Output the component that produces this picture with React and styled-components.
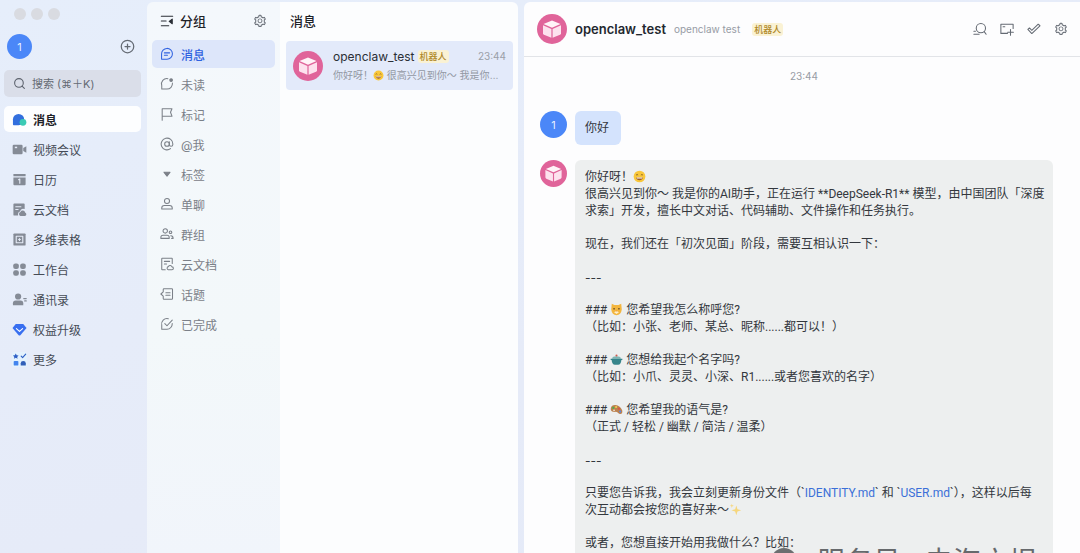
import React, { useState } from 'react';
import styled, { createGlobalStyle } from 'styled-components';
import { AtSign, CirclePlus, Search } from 'lucide-react';
import { AiOutlineSetting } from 'react-icons/ai';

const GlobalStyle = createGlobalStyle`
  * {
    box-sizing: border-box;
  }

  body {
    margin: 0;
    overflow: hidden;
    color: #2b2f36;
    font-family: Inter, 'Noto Sans CJK SC', sans-serif;
    font-size: 12px;
  }

  button, input {
    font: inherit;
    color: inherit;
  }

  button {
    border: 0;
    padding: 0;
    background: none;
    cursor: pointer;
  }

  h1, h2, p, ul {
    margin: 0;
    padding: 0;
  }
`;

const Container = styled.div`
  display: flex;
  width: 100%;
  height: 100vh;
  overflow: hidden;
  background: linear-gradient(160deg, #e6eefb 0%, #e6ebf8 60%, #e4eaf8 100%);
`;

// sidebar

const Sidebar = styled.aside`
  flex: 0 0 147px;
  display: flex;
  flex-direction: column;
  padding: 8px 6px 0 4px;
`;

const WindowDots = styled.div`
  display: flex;
  gap: 5px;
  padding-left: 10px;
`;

const Dot = styled.span`
  width: 12px;
  height: 12px;
  border-radius: 50%;
  background: #d9dbe1;
`;

const ProfileRow = styled.div`
  display: flex;
  align-items: center;
  justify-content: space-between;
  padding: 0 6px 0 3px;
  margin-top: 14px;
`;

const Avatar = styled.span`
  flex: none;
  display: flex;
  align-items: center;
  justify-content: center;
  width: ${props => props.$size}px;
  height: ${props => props.$size}px;
  border-radius: 50%;
  background: #4b87f8;
  color: #e6efff;
  font-size: 11px;
`;

const IconButton = styled.button`
  display: flex;
  align-items: center;
  justify-content: center;
  width: 16px;
  height: 16px;
  color: #646a73;
`;

const SearchBox = styled.label`
  display: flex;
  align-items: center;
  gap: 6px;
  height: 27px;
  margin: 11px 0 9px;
  padding: 0 9px;
  border-radius: 5px;
  background: #dadee9;
  color: #5c626d;

  svg {
    flex: none;
  }

  input {
    width: 100%;
    min-width: 0;
    border: 0;
    padding: 0;
    outline: 0;
    background: none;
    font-size: 11px;
  }

  input::placeholder {
    color: #646a73;
    opacity: 1;
  }
`;

const NavList = styled.nav`
  display: flex;
  flex-direction: column;
  gap: ${props => props.$gap}px;
`;

const NavItem = styled.button`
  display: flex;
  align-items: center;
  gap: 6px;
  width: 100%;
  height: 26px;
  padding-left: 8px;
  border-radius: 5px;
  background: ${props => props.$active ? '#fdfeff' : 'transparent'};
  color: ${props => props.$active ? '#1f2329' : '#454b56'};
  font-weight: ${props => props.$active ? 600 : 400};
`;

// groups

const GroupPanel = styled.section`
  flex: 0 0 133px;
  margin-top: 2px;
  padding: 11px 5px 0;
  border-radius: 6px 0 0 0;
  background: linear-gradient(180deg, #f4f8fc 0%, #f3f8fa 60%, #f1f5fb 100%);
`;

const GroupHeader = styled.div`
  display: flex;
  align-items: center;
  gap: 6px;
  height: 16px;
  padding: 0 7px 0 8px;
  margin-bottom: 11px;

  button {
    margin-left: auto;
  }
`;

const PanelTitle = styled.h2`
  font-size: 13px;
  font-weight: 500;
  line-height: 16px;
  color: #1f2329;
`;

const GroupItem = styled.button`
  display: flex;
  align-items: center;
  gap: 7px;
  width: 100%;
  height: 28px;
  padding-left: 8px;
  border-radius: 5px;
  background: ${props => props.$active ? '#dde6fa' : 'transparent'};
  color: ${props => props.$active ? '#2f62e0' : '#7b8088'};
  font-weight: ${props => props.$active ? 500 : 400};
`;

// conversations

const ListPanel = styled.section`
  flex: 0 0 238px;
  min-width: 0;
  margin-top: 2px;
  padding: 11px 5px 0 6px;
  border-radius: 0 6px 0 0;
  background: #fcfdfe;
`;

const ListHeader = styled.div`
  padding-left: 4px;
  margin-bottom: 12px;
`;

const Conversation = styled.button`
  display: flex;
  align-items: center;
  gap: 10px;
  width: 100%;
  height: 49px;
  padding: 0 7px;
  border-radius: 4px;
  background: #e3eafa;
  text-align: left;
`;

const ConversationText = styled.span`
  flex: 1;
  min-width: 0;
  display: flex;
  flex-direction: column;
  gap: 2px;
`;

const NameRow = styled.span`
  display: flex;
  align-items: center;
  gap: 3px;
  line-height: 17px;
  font-size: 12px;
`;

const Tag = styled.span`
  padding: 0 2px;
  border-radius: 3px;
  background: #faf2d4;
  color: #b0892a;
  font-size: 9px;
  font-weight: 500;
  line-height: 13px;
`;

const Time = styled.time`
  margin-left: auto;
  color: #9a9fa8;
  font-size: 10px;
`;

const Preview = styled.span`
  overflow: hidden;
  margin-right: 4px;
  white-space: nowrap;
  text-overflow: ellipsis;
  color: #9298a3;
  font-size: 10px;
  line-height: 17px;

  svg {
    width: 11px;
    height: 11px;
  }
`;

// chat

const Chat = styled.main`
  flex: 1;
  min-width: 0;
  display: flex;
  flex-direction: column;
  margin: 2px 0 0 6px;
  border-radius: 6px 0 0 0;
  background: #fdfdfe;
`;

const ChatHeader = styled.header`
  flex: none;
  display: flex;
  align-items: center;
  gap: 8px;
  height: 55px;
  padding: 0 11px 0 13px;
  border-bottom: 1px solid #e2e4e8;
`;

const ChatName = styled.h1`
  font-size: 13px;
  font-weight: 600;
  color: #23272e;
`;

const ChatAlias = styled.span`
  margin-right: 4px;
  color: #979ca5;
  font-size: 10px;
`;

const Toolbar = styled.div`
  display: flex;
  gap: 11px;
  margin-left: auto;
`;

const DateLine = styled.p`
  margin: 11px 0 27px;
  padding-left: 4px;
  text-align: center;
  line-height: 16px;
  font-size: 10px;
  color: #979ca5;
`;

const Message = styled.article`
  display: flex;
  align-items: flex-start;
  gap: 8px;
  padding: 0 27px 0 16px;
  margin-bottom: 15px;
`;

const Bubble = styled.div`
  flex: ${props => props.$own ? '0 0 auto' : '1'};
  min-width: 0;
  padding: 9px ${props => props.$own ? 12 : 6}px 8px 10px;
  border-radius: 6px;
  background: ${props => props.$own ? '#d4e3fd' : '#edefef'};
  font-family: Roboto, 'Noto Sans CJK SC', sans-serif;
  line-height: 17px;
  color: #33373d;

  p + p {
    margin-top: 16px;
  }
`;

const Dashes = styled.p`
  font-family: Inter, sans-serif;
`;

const FileLink = styled.a`
  color: #3b6fd8;
  text-decoration: none;
`;

const Emoji = styled.svg`
  width: 13px;
  height: 13px;
  vertical-align: -2px;
`;

// caption lying over the bottom edge of the chat
const Watermark = styled.div`
  position: absolute;
  left: 771px;
  top: 548px;
  display: flex;
  gap: 20px;
  color: #66696c;
  font-size: 28px;
  line-height: 28px;
  white-space: nowrap;
`;

const WatermarkDot = styled.span`
  width: 26px;
  height: 26px;
  border-radius: 50%;
  background: #6c6e70;
`;

const Svg = ({ size = 14, children, ...rest }) => (
  <svg width={size} height={size} viewBox="0 0 16 16" fill="none" stroke="currentColor"
    strokeWidth="1.2" strokeLinecap="round" strokeLinejoin="round" aria-hidden="true" {...rest}>
    {children}
  </svg>
);

const Solid = ({ children }) => (
  <Svg fill="#858b96" stroke="none" size={15}>{children}</Svg>
);

const BotIcon = styled.svg`
  flex: none;
`;

const BotAvatar = ({ size }) => (
  <BotIcon width={size} height={size} viewBox="0 0 30 30" aria-hidden="true">
    <circle cx="15" cy="15" r="15" fill="#e0649a" />
    <path d="M15 6.5 23.5 10 15 13.7 6.5 10Z" fill="#fff4f8" />
    <path d="M6 11.2 14.4 14.9V23.8L7 20.8Q6 20.3 6 19.3Z" fill="#fde2ee" />
    <path d="M24 11.2 15.6 14.9V23.8L23 20.8Q24 20.3 24 19.3Z" fill="#fde2ee" />
  </BotIcon>
);

const Smile = () => (
  <Emoji viewBox="0 0 16 16" role="img" aria-label="😄">
    <circle cx="8" cy="8" r="7.2" fill="#f9c73b" />
    <path d="M3.8 6.3Q5 4.8 6.3 6.3M9.7 6.3Q11 4.8 12.2 6.3" stroke="#79501d" fill="none" />
    <path d="M3.8 9.2H12.2Q11.5 12.6 8 12.6T3.8 9.2Z" fill="#9a5a28" />
    <path d="M4.4 9.3H11.6L11.2 10.4H4.8Z" fill="#fff" />
  </Emoji>
);

const Cat = () => (
  <Emoji viewBox="0 0 16 16" role="img" aria-label="🐱">
    <path d="M2.2 1 5.500 2.500H10.500L13.800 1 14.500 8Q13.500 15 8 15T1.500 8Z" fill="#f3b63f" />
    <circle cx="5" cy="7.2" r="1" fill="#5b4424" />
    <circle cx="11" cy="7.2" r="1" fill="#5b4424" />
    <path d="M5 11.5Q8 8.5 11 11.5L8 13.5Z" fill="#fff0cc" />
    <path d="M7.2 9.6H8.8L8 10.6Z" fill="#d96b5d" />
  </Emoji>
);

const Pot = () => (
  <Emoji viewBox="0 0 16 16" role="img" aria-label="🍲">
    <path d="M2.5 7Q3 4 8 4T13.5 7Z" fill="#7eb5b3" />
    <circle cx="8" cy="3" r="1.3" fill="#cf5c4f" />
    <path d="M.8 7H15.2V8.5H14Q13.5 14 10 14.5H6Q2.5 14 2 8.5H.8Z" fill="#36858b" />
  </Emoji>
);

const Palette = () => (
  <Emoji viewBox="0 0 16 16" role="img" aria-label="🎨">
    <path d="M1 6Q2 2 7 2.5T15 9Q16 14 12 13.5 10 13 9 11.5 8 10.5 6 11 0 11 1 6Z" fill="#bc8250" />
    <circle cx="4" cy="6" r="1.3" fill="#4caf50" />
    <circle cx="7.5" cy="5" r="1.3" fill="#f6d04d" />
    <circle cx="11" cy="7" r="1.3" fill="#e25141" />
    <circle cx="12.5" cy="10.5" r="1.2" fill="#4b87f8" />
    <circle cx="5" cy="9" r="1.1" fill="#f3e6d8" />
  </Emoji>
);

const Sparkle = () => (
  <Emoji viewBox="0 0 16 16" role="img" aria-label="✨">
    <path d="M9 3 10.4 7.6 15 9 10.4 10.4 9 15 7.6 10.4 3 9 7.6 7.6Z" fill="#f6d67c" />
    <path d="M3.5 1 4.1 2.9 6 3.5 4.1 4.1 3.5 6 2.9 4.1 1 3.5 2.9 2.9Z" fill="#f6d67c" />
  </Emoji>
);

const navItems = [
  {
    label: '消息',
    icon: <Svg size={15} stroke="none"><path d="M7 2a6 6 0 1 1 0 12H1.8Q1 14 1 13V8A6 6 0 0 1 7 2Z" fill="#326fde" /><circle cx="11.7" cy="11" r="3.6" fill="#3bcbb5" /></Svg>,
  },
  {
    label: '视频会议',
    icon: <Solid><path d="M2 3H10Q11.300 3 11.300 4.300V11.700Q11.300 13 10 13H2Q.7 13 .7 11.700V4.300Q.7 3 2 3ZM12 6.500 15.300 4.500V11.500L12 9.500Z" /><rect x="3" y="5" width="2.500" height="1.600" fill="#e5ebf7" /></Solid>,
  },
  {
    label: '日历',
    icon: <Solid><path d="M1.500 2H14.500V4.600H1.500ZM1.500 5.800H14.500V13Q14.500 14 13.500 14H2.500Q1.500 14 1.500 13Z" /><path d="M7 8.200 8.300 7.500V12" stroke="#e5ebf7" fill="none" /></Solid>,
  },
  {
    label: '云文档',
    icon: <Solid><path d="M2.500 1.500H12.500Q13.500 1.500 13.500 2.500V7.500Q9.500 6 8.500 10 6 10.500 6.500 14.500H2.500Q1.500 14.500 1.500 13.500V2.500Q1.500 1.500 2.500 1.500Z" /><path d="M4 5H9.500M4 8H6.500" stroke="#e5ebf7" /><path d="M9 14.800A2.200 2.200 0 0 1 9 10.600 2.700 2.700 0 0 1 14 11.200 1.900 1.900 0 0 1 14 14.800Z" /></Solid>,
  },
  {
    label: '多维表格',
    icon: <Solid><path d="M2.500 1.500H13.500Q14.500 1.500 14.500 2.500V13.500Q14.500 14.500 13.500 14.500H2.500Q1.500 14.500 1.500 13.500V2.500Q1.500 1.500 2.500 1.500Z" /><path d="M4.500 4.500H11.500V11.500H4.500Z" stroke="#e5ebf7" fill="none" /><path d="M8 7V9M7 8H9" stroke="#e5ebf7" /></Solid>,
  },
  {
    label: '工作台',
    icon: <Solid><rect x="1.300" y="1.500" width="6" height="6" rx="2.300" /><rect x="8.700" y="1.500" width="6" height="6" rx="2.300" /><rect x="1.300" y="8.700" width="6" height="6" rx="2.300" /><rect x="8.700" y="8.700" width="6" height="6" rx="2.300" /></Solid>,
  },
  {
    label: '通讯录',
    icon: <Solid><circle cx="6.500" cy="4.800" r="3.300" /><path d="M1 14V12Q1 9 4 9H9Q12 9 12 12V14Z" /><path d="M12.500 7H15.200M13.500 9.500H15.200" stroke="#858b96" /></Solid>,
  },
  {
    label: '权益升级',
    icon: <Svg size={15} stroke="none"><path d="M4 2H12L15.500 6.500 8.900 14Q8 14.800 7.100 14L.5 6.500Z" fill="#386ff0" /><path d="M4.700 7 8 10 11.300 7" stroke="#fff" fill="none" /></Svg>,
  },
  {
    label: '更多',
    icon: <Svg size={15} stroke="none"><rect width="16" height="16" rx="2" fill="#e4f2fd" /><path d="M4 1.500 5 3.500 7 3.800 5.500 5.200 6 7.200 4 6.200 2 7.200 2.500 5.200 1 3.800 3 3.500Z" fill="#2d5fc6" /><path d="M9.800 4.500 11.300 6 14.600 2.300" stroke="#2d5fc6" fill="none" /><rect x="1.800" y="9.500" width="5" height="5" rx="1" fill="#4384ee" /><path d="M9.300 14.500V12Q9.300 9.500 12 9.500T14.700 12V14.500Z" fill="#315fb8" /></Svg>,
  },
];

const groupItems = [
  { label: '消息', icon: <Svg><path d="M2.200 14H8A6.200 6.200 0 1 0 1.800 8V13.600Q1.800 14 2.200 14ZM5 6.700H11M5 9.500H8.500" /></Svg> },
  { label: '未读', icon: <Svg><path d="M9 1.900A6.200 6.200 0 0 0 2 10V13.800H8A6.200 6.200 0 0 0 14.200 7" /><circle cx="12.700" cy="3.500" r="1.500" fill="currentColor" /></Svg> },
  { label: '标记', icon: <Svg><path d="M2.500 15V2H13.700L12 6 13.700 10.500H2.500" /></Svg> },
  { label: '@我', icon: <AtSign size={14} strokeWidth={1.8} aria-hidden="true" /> },
  { label: '标签', icon: <Svg><path d="M4.500 6H11.500L8 10.500Z" fill="currentColor" /></Svg> },
  { label: '单聊', icon: <Svg><circle cx="8" cy="4.500" r="2.900" /><path d="M2 13.800V12.500Q2 9.800 5 9.800H11Q14 9.800 14 12.500V13.800Z" /></Svg> },
  { label: '群组', icon: <Svg><circle cx="6" cy="4.500" r="2.500" /><path d="M1 13V11.800Q1 9.500 3.500 9.500H8Q10.500 9.500 10.500 11.800V13Z" /><circle cx="12" cy="6" r="1.500" /><path d="M12.300 10Q15 10 15 13H13.300" /></Svg> },
  { label: '云文档', icon: <Svg><path d="M6 14.500H2.500Q2 14.500 2 14V2Q2 1.500 2.500 1.500H13.500Q14 1.500 14 2V7.500M5 5H11M5 8H7.500" /><path d="M9.500 14.500A1.800 1.800 0 0 1 9.500 11 2.300 2.300 0 0 1 13.700 11.300 1.600 1.600 0 0 1 13.700 14.500Z" /></Svg> },
  { label: '话题', icon: <Svg><path d="M4.500 2H13.500Q14.300 2 14.300 2.800V13.200Q14.300 14 13.500 14H4.500Q3.700 14 3.700 13.200V10.500L1 8 3.700 5.500V2.800Q3.700 2 4.500 2ZM6.700 6.500H11.500M6.700 9.500H11.500" /></Svg> },
  { label: '已完成', icon: <Svg><path d="M9.500 2A6.200 6.200 0 0 0 2 9.500V14H8A6.200 6.200 0 0 0 14 7.500" /><path d="M5.500 7.500 8 10 14 3.500" /></Svg> },
];

function App() {
  const [page, setPage] = useState('消息');
  const [group, setGroup] = useState('消息');

  return (
    <Container>
      <GlobalStyle />
      <Sidebar>
        <WindowDots>
          <Dot />
          <Dot />
          <Dot />
        </WindowDots>
        <ProfileRow>
          <Avatar $size={25}>1</Avatar>
          <IconButton aria-label="新建">
            <CirclePlus size={15} />
          </IconButton>
        </ProfileRow>
        <SearchBox>
          <Search size={13} aria-hidden="true" />
          <input type="text" aria-label="搜索" placeholder="搜索 (⌘＋K)" />
        </SearchBox>
        <NavList $gap={4}>
          {navItems.map((item) => (
            <NavItem key={item.label} $active={page === item.label} onClick={() => setPage(item.label)}>
              {item.icon}
              {item.label}
            </NavItem>
          ))}
        </NavList>
      </Sidebar>

      <GroupPanel>
        <GroupHeader>
          <Svg><path d="M1.500 2.500H14.500M1.500 8H7M1.500 13.500H10" /><path d="M14 5.800V11.200L10.500 8.500Z" fill="currentColor" /></Svg>
          <PanelTitle>分组</PanelTitle>
          <IconButton aria-label="分组设置">
            <AiOutlineSetting size={14} />
          </IconButton>
        </GroupHeader>
        <NavList $gap={2}>
          {groupItems.map((item) => (
            <GroupItem key={item.label} $active={group === item.label} onClick={() => setGroup(item.label)}>
              {item.icon}
              {item.label}
            </GroupItem>
          ))}
        </NavList>
      </GroupPanel>

      <ListPanel>
        <ListHeader>
          <PanelTitle>消息</PanelTitle>
        </ListHeader>
        <Conversation>
          <BotAvatar size={30} />
          <ConversationText>
            <NameRow>
              openclaw_test
              <Tag>机器人</Tag>
              <Time>23:44</Time>
            </NameRow>
            <Preview>你好呀！<Smile /> 很高兴见到你～ 我是你的AI助手</Preview>
          </ConversationText>
        </Conversation>
      </ListPanel>

      <Chat>
        <ChatHeader>
          <BotAvatar size={30} />
          <ChatName>openclaw_test</ChatName>
          <ChatAlias>openclaw test</ChatAlias>
          <Tag>机器人</Tag>
          <Toolbar>
            <IconButton aria-label="搜索消息">
              <Svg><circle cx="9" cy="7" r="5.300" /><path d="M12.800 11 15 14M1 10.500H2.800M1 14H7" /></Svg>
            </IconButton>
            <IconButton aria-label="添加标签页">
              <Svg><path d="M8.500 13H1V2.500H15V7.500M3.500 5.500H5.500M12 8.500V15M8.800 11.700H15.300" /></Svg>
            </IconButton>
            <IconButton aria-label="任务">
              <Svg><path d="M1 8.500 2.800 6.800 5.500 9.500 12.800 2.500 14.800 4.300 5.500 13.200Z" /></Svg>
            </IconButton>
            <IconButton aria-label="设置">
              <AiOutlineSetting size={14} />
            </IconButton>
          </Toolbar>
        </ChatHeader>

        <DateLine>23:44</DateLine>
        <Message>
          <Avatar $size={27}>1</Avatar>
          <Bubble $own>
            <p>你好</p>
          </Bubble>
        </Message>
        <Message>
          <BotAvatar size={27} />
          <Bubble>
            <p>
              你好呀！<Smile /><br />
              很高兴见到你～ 我是你的AI助手，正在运行 **DeepSeek-R1** 模型，由中国团队「深度求索」开发，擅长中文对话、代码辅助、文件操作和任务执行。
            </p>
            <p>现在，我们还在「初次见面」阶段，需要互相认识一下：</p>
            <Dashes>---</Dashes>
            <p>
              ### <Cat /> 您希望我怎么称呼您?<br />
              （比如：小张、老师、某总、昵称......都可以！）
            </p>
            <p>
              ### <Pot /> 您想给我起个名字吗?<br />
              （比如：小爪、灵灵、小深、R1......或者您喜欢的名字）
            </p>
            <p>
              ### <Palette /> 您希望我的语气是?<br />
              （正式 / 轻松 / 幽默 / 简洁 / 温柔）
            </p>
            <Dashes>---</Dashes>
            <p>
              只要您告诉我，我会立刻更新身份文件（`<FileLink href="#identity">IDENTITY.md</FileLink>` 和 `<FileLink href="#user">USER.md</FileLink>`），这样以后每<br />
              次互动都会按您的喜好来～<Sparkle />
            </p>
            <p>或者，您想直接开始用我做什么？比如：</p>
          </Bubble>
        </Message>
      </Chat>
      <Watermark aria-hidden="true">
        <WatermarkDot />
        服务号 · 未海方坝
      </Watermark>
    </Container>
  );
}

export default App;
